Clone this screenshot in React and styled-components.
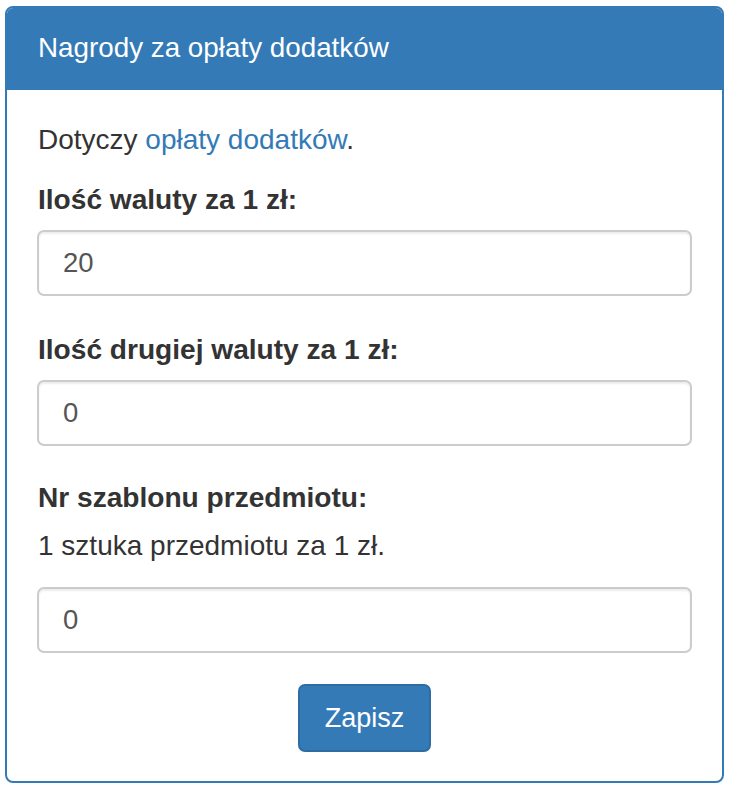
import React from "react";
import styled, { createGlobalStyle } from "styled-components";

const Global = createGlobalStyle`
  html, body { margin: 0; padding: 0; background: #fff; }
  body {
    font-family: "Liberation Sans", Arial, Helvetica, sans-serif;
    color: #333;
  }
  * { box-sizing: border-box; }
`;

const Page = styled.div`
  padding: 6px 8px 8px 5px;
`;

const Panel = styled.section`
  width: 719px;
  border: 2px solid #337ab7;
  border-radius: 8px;
  overflow: hidden;
  background: #fff;
`;

const Heading = styled.header`
  background: #337ab7;
  color: #fff;
  padding: 24px 31px 26px;
`;

const Title = styled.h3`
  margin: 0;
  font-size: 27.8px;
  line-height: 32px;
  font-weight: normal;
`;

const Body = styled.form`
  display: flex;
  flex-direction: column;
  padding: 32px 30px 29px;
`;

const Text = styled.p`
  margin: 0 0 ${(p) => p.$mb || 0}px;
  font-size: 28px;
  line-height: 36px;
  padding-left: 1px;
`;

const Link = styled.a`
  color: #337ab7;
  text-decoration: none;
`;

const Group = styled.div`
  display: flex;
  flex-direction: column;
  margin-bottom: ${(p) => p.$mb}px;
`;

const Label = styled.label`
  font-size: 28.1px;
  line-height: 36px;
  font-weight: bold;
  margin-bottom: 12px;
  padding-left: 1px;
`;

const Input = styled.input`
  height: 66px;
  width: 100%;
  padding: 0 24px;
  font-family: "Liberation Sans", Arial, Helvetica, sans-serif;
  font-size: 27.5px;
  color: #555;
  background: #fff;
  border: 2px solid #ccc;
  border-radius: 7px;
  box-shadow: inset 0 2px 2px rgba(0, 0, 0, 0.075);
  outline: none;
`;

const Actions = styled.div`
  display: flex;
  justify-content: center;
`;

const Button = styled.button`
  height: 68px;
  padding: 0 25px;
  font-family: "Liberation Sans", Arial, Helvetica, sans-serif;
  font-size: 27px;
  color: #fff;
  background: #337ab7;
  border: 2px solid #2e6da4;
  border-radius: 7px;
  cursor: pointer;
`;

export default function App() {
  return (
    <Page>
      <Global />
      <Panel>
        <Heading>
          <Title>Nagrody za opłaty dodatków</Title>
        </Heading>
        <Body onSubmit={(e) => e.preventDefault()}>
          <Text $mb={24}>
            Dotyczy <Link href="#">opłaty dodatków</Link>.
          </Text>
          <Group $mb={36}>
            <Label>Ilość waluty za 1 zł:</Label>
            <Input type="text" defaultValue="20" />
          </Group>
          <Group $mb={34}>
            <Label>Ilość drugiej waluty za 1 zł:</Label>
            <Input type="text" defaultValue="0" />
          </Group>
          <Group $mb={31}>
            <Label>Nr szablonu przedmiotu:</Label>
            <Text $mb={23}>1 sztuka przedmiotu za 1 zł.</Text>
            <Input type="text" defaultValue="0" />
          </Group>
          <Actions>
            <Button type="submit">Zapisz</Button>
          </Actions>
        </Body>
      </Panel>
    </Page>
  );
}
